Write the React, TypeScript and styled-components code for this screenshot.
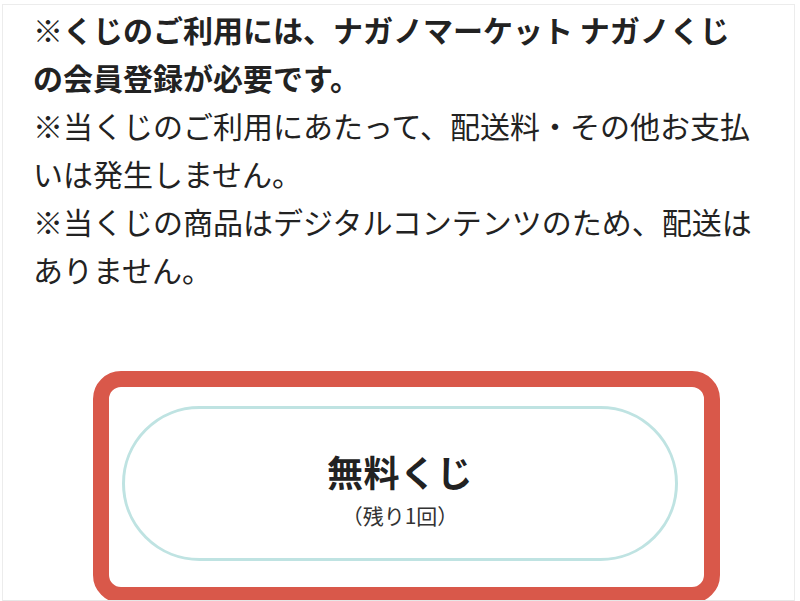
import React from "react";
import styled, { createGlobalStyle } from "styled-components";

const Global = createGlobalStyle`
  html, body { margin: 0; padding: 0; background: #ffffff; }
  body {
    font-family: "Noto Sans CJK JP", "Noto Sans", sans-serif;
    color: #222222;
  }
  #root { width: 800px; height: 601px; overflow: hidden; }
`;

const Frame = styled.div`
  box-sizing: border-box;
  margin: 4px 5px 0 2px;
  height: 597px;
  border: 1px solid #ececec;
  border-bottom-color: #e6e6e6;
  padding: 0 38px 0 30px;
  background: #ffffff;
  overflow: hidden;
`;

const Note = styled.p<{ $bold?: boolean }>`
  margin: 0;
  font-size: 30px;
  line-height: 48px;
  font-weight: ${(p) => (p.$bold ? 700 : 400)};
  color: #222222;
`;

const Highlight = styled.div`
  box-sizing: border-box;
  margin: 78px 0 0 60px;
  width: 627px;
  height: 232px;
  border: 16px solid #d9584a;
  border-radius: 28px;
  padding: 19px 26px 24px 13px;
`;

const Pill = styled.button`
  box-sizing: border-box;
  width: 100%;
  height: 155px;
  border: 3px solid #bfe3e2;
  border-radius: 78px;
  background: #ffffff;
  display: flex;
  flex-direction: column;
  align-items: center;
  justify-content: center;
  gap: 8px;
  padding: 10px 0 0 0;
  font-family: "Noto Sans CJK JP", "Noto Sans", sans-serif;
  cursor: pointer;
`;

const Title = styled.span`
  font-size: 36px;
  line-height: 44px;
  font-weight: 700;
  color: #222222;
  letter-spacing: 0.5px;
`;

const Sub = styled.span`
  font-size: 21px;
  line-height: 28px;
  font-weight: 400;
  color: #333333;
`;

export default function App() {
  return (
    <>
      <Global />
      <Frame>
        <Note $bold>
          ※くじのご利用には、ナガノマーケット ナガノくじの会員登録が必要です。
        </Note>
        <Note>※当くじのご利用にあたって、配送料・その他お支払いは発生しません。</Note>
        <Note>※当くじの商品はデジタルコンテンツのため、配送はありません。</Note>
        <Highlight>
          <Pill type="button">
            <Title>無料くじ</Title>
            <Sub>（残り1回）</Sub>
          </Pill>
        </Highlight>
      </Frame>
    </>
  );
}
